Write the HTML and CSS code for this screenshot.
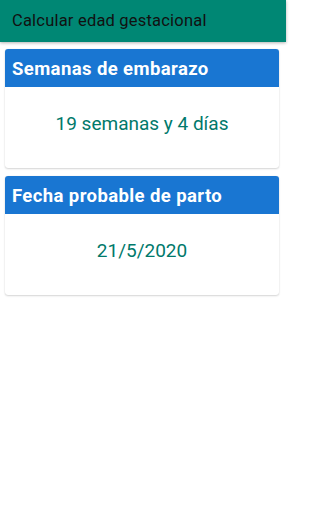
FILE: index.html
```html
<!DOCTYPE html>
<html lang="es">
<head>
<meta charset="utf-8">
<link rel="stylesheet" href="styles.css">
</head>
<body>
<div class="screen">
  <header class="appbar">Calcular edad gestacional</header>
  <main class="content">
    <section class="card">
      <h2 class="card-title">Semanas de embarazo</h2>
      <div class="card-body">19 semanas y 4 días</div>
    </section>
    <section class="card">
      <h2 class="card-title">Fecha probable de parto</h2>
      <div class="card-body">21/5/2020</div>
    </section>
  </main>
</div>
</body>
</html>
```
FILE: styles.css
```css
html, body {
  margin: 0;
  padding: 0;
  background: #ffffff;
  font-family: Roboto, "Liberation Sans", sans-serif;
}
.screen {
  width: 286px;
  height: 512px;
}
.appbar {
  height: 42px;
  box-sizing: border-box;
  padding: 10px 12px 0;
  background: #008774;
  color: #111;
  font-size: 16.5px;
  letter-spacing: 0.2px;
  line-height: 22px;
  box-shadow: 0 1px 3px rgba(0,0,0,0.3);
}
.content {
  display: flex;
  flex-direction: column;
  gap: 8px;
  padding: 7px 7px 0 5px;
}
.card {
  border-radius: 3px;
  overflow: hidden;
  background: #fff;
  box-shadow: 0 1px 2px rgba(0,0,0,0.16), 0 0 1px rgba(0,0,0,0.12);
}
.card-title {
  margin: 0;
  height: 38px;
  box-sizing: border-box;
  padding: 8px 7px 0;
  background: #1976d2;
  color: #fff;
  font-size: 18.5px;
  letter-spacing: 0.4px;
  font-weight: bold;
  line-height: 24px;
}
.card-body {
  height: 81px;
  box-sizing: border-box;
  padding-top: 24px;
  text-align: center;
  color: #00796b;
  font-size: 19px;
  line-height: 26px;
}
```
